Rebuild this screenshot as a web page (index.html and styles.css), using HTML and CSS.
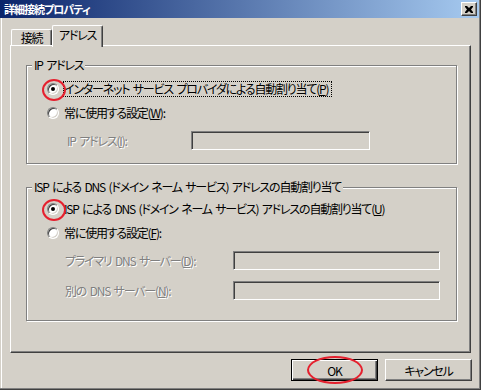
FILE: index.html
```html
<!DOCTYPE html>
<html lang="ja">
<head>
  <meta charset="UTF-8" />
  <title>詳細接続プロパティ</title>
  <link rel="stylesheet" href="styles.css">
</head>
<body>
  <div class="window">
    <div class="titlebar">
      <span class="title">詳細接続プロパティ</span>
      <span class="close-btn">
        <svg width="8" height="7" viewBox="0 0 8 7"><path d="M0 0h2l2 2 2-2h2v1l-2 2.5 2 2.5v1h-2l-2-2-2 2h-2v-1l2-2.5-2-2.5z" fill="#000"/></svg>
      </span>
    </div>

    <div class="tabs">
      <div class="tab">接続</div>
      <div class="tab active">アドレス</div>
    </div>

    <div class="panel">
      <!-- IP address group -->
      <fieldset class="group group-ip">
        <legend>IP アドレス</legend>
        <div class="opt first">
          <span class="radio checked marked"></span>
          <span class="label focus">インターネット サービス プロバイダによる自動割り当て(<u>P</u>)</span>
        </div>
        <div class="opt">
          <span class="radio"></span>
          <span class="label">常に使用する設定(<u>W</u>):</span>
        </div>
        <div class="field ip-field">
          <span class="field-label">IP アドレス(<u>I</u>):</span>
          <span class="input"></span>
        </div>
      </fieldset>

      <!-- DNS group -->
      <fieldset class="group group-dns">
        <legend>ISP による DNS (ドメイン ネーム サービス) アドレスの自動割り当て</legend>
        <div class="opt first">
          <span class="radio checked marked"></span>
          <span class="label">ISP による DNS (ドメイン ネーム サービス) アドレスの自動割り当て(<u>U</u>)</span>
        </div>
        <div class="opt">
          <span class="radio"></span>
          <span class="label">常に使用する設定(<u>F</u>):</span>
        </div>
        <div class="field dns-field">
          <span class="field-label">プライマリ DNS サーバー(<u>D</u>):</span>
          <span class="input"></span>
        </div>
        <div class="field dns-field second">
          <span class="field-label">別の DNS サーバー(<u>N</u>):</span>
          <span class="input"></span>
        </div>
      </fieldset>
    </div>

    <div class="buttons">
      <button class="btn default">OK</button>
      <button class="btn">キャンセル</button>
    </div>
  </div>
</body>
</html>
```

FILE: styles.css
```css
body {
  margin: 0;
  background: #d4d0c8;
  font-family: "Noto Sans CJK JP", "Liberation Sans", sans-serif;
  font-size: 12px;
  font-feature-settings: "palt";
  letter-spacing: -1.2px;
  word-spacing: 2px;
  color: #000;
}

.window {
  width: 481px;
  height: 390px;
  box-sizing: border-box;
  background: #d4d0c8;
  border-right: 1px solid #404040;
  border-bottom: 1px solid #404040;
  box-shadow: inset -1px -1px 0 #808080, inset 1px 0 0 #d4d0c8, inset 2px 0 0 #fff;
  display: flex;
  flex-direction: column;
}

.titlebar {
  height: 18px;
  margin-right: 1px;
  background: linear-gradient(to right, #0a246a, #a6caf0);
  display: flex;
  align-items: center;
  justify-content: space-between;
  padding: 0 2px 0 4px;
}

.title {
  color: #fff;
  font-weight: bold;
  font-size: 11px;
  letter-spacing: -1px;
  line-height: 18px;
}

.close-btn {
  width: 16px;
  height: 14px;
  box-sizing: border-box;
  background: #d4d0c8;
  border: 1px solid;
  border-color: #fff #404040 #404040 #fff;
  box-shadow: inset -1px -1px 0 #808080;
  display: flex;
  align-items: center;
  justify-content: center;
}

.tabs {
  display: flex;
  align-items: flex-end;
  padding: 7px 0 0 11px;
  height: 20px;
}

.tab {
  height: 16px;
  width: 41px;
  box-sizing: border-box;
  border-top: 1px solid #fff;
  border-left: 1px solid #fff;
  border-right: 1px solid #404040;
  box-shadow: inset -1px 0 0 #808080;
  border-radius: 2px 2px 0 0;
  text-align: center;
  line-height: 16px;
}

.tab.active {
  width: 51px;
  height: 22px;
  margin-bottom: -2px;
  background: #d4d0c8;
  position: relative;
  z-index: 1;
  line-height: 18px;
}

.panel {
  height: 308px;
  width: 461px;
  margin-left: 10px;
  box-sizing: border-box;
  border: 1px solid;
  border-color: #fff #404040 #404040 #fff;
  box-shadow: inset -1px -1px 0 #808080;
  padding: 12px 0 0 15px;
}

.group {
  width: 431px;
  box-sizing: border-box;
  margin: 0;
  padding: 0 0 13px 0;
  border: 1px solid #808080;
  box-shadow: inset 1px 1px 0 #fff, 1px 1px 0 #fff;
  min-width: 0;
}

.group legend {
  padding: 0 2px;
  margin-left: 5px;
  line-height: 14px;
  background: #d4d0c8;
}

.group-dns {
  margin-top: 16px;
  padding-bottom: 20px;
}

.opt {
  height: 24px;
  display: flex;
  align-items: center;
  padding-left: 20px;
}

.group-ip .opt.first {
  margin-top: 5px;
}

.group-dns .opt.first {
  margin-top: 3px;
}

.radio {
  width: 12px;
  height: 12px;
  box-sizing: border-box;
  border-radius: 50%;
  background: #fff;
  border: 1px solid;
  border-color: #808080 #fff #fff #808080;
  box-shadow: inset 1px 1px 0 #404040, inset -1px -1px 0 #d4d0c8;
  display: flex;
  align-items: center;
  justify-content: center;
  position: relative;
  flex-shrink: 0;
}

.radio.checked::after {
  content: "";
  width: 4px;
  height: 4px;
  border-radius: 50%;
  background: #000;
}

/* red annotation ring */
.radio.marked::before {
  content: "";
  position: absolute;
  left: -6px;
  top: -5px;
  width: 20px;
  height: 18px;
  border: 2px solid #e5202e;
  border-radius: 50%;
}

.label {
  margin-left: 4px;
  padding-right: 3px;
  border: 1px dotted transparent;
  line-height: 14px;
  white-space: nowrap;
  flex-shrink: 0;
}

.label.focus {
  border-color: #000;
}

.field {
  display: flex;
  align-items: center;
  height: 19px;
}

.field-label {
  color: #808080;
  text-shadow: 1px 1px 0 #fff;
  white-space: nowrap;
}

.ip-field {
  margin-top: 6px;
  padding-left: 40px;
}

.ip-field .field-label {
  width: 124px;
}

.ip-field .input {
  width: 179px;
}

.dns-field {
  margin-top: 6px;
  padding-left: 38px;
}

.dns-field.second {
  margin-top: 11px;
}

.dns-field .field-label {
  width: 168px;
}

.dns-field .input {
  width: 207px;
}

.input {
  height: 19px;
  box-sizing: border-box;
  background: #d4d0c8;
  border: 1px solid;
  border-color: #808080 #fff #fff #808080;
  box-shadow: inset 1px 1px 0 #404040, inset -1px -1px 0 #d4d0c8;
}

.buttons {
  display: flex;
  justify-content: flex-end;
  gap: 7px;
  padding-right: 8px;
  margin-top: 6px;
}

.btn {
  width: 87px;
  height: 22px;
  box-sizing: border-box;
  font: inherit;
  letter-spacing: inherit;
  word-spacing: inherit;
  color: #000;
  background: #d4d0c8;
  border: 1px solid;
  border-color: #fff #404040 #404040 #fff;
  box-shadow: inset -1px -1px 0 #808080;
  padding: 0;
  position: relative;
}

.btn.default {
  border: 1px solid #000;
  box-shadow: inset 1px 1px 0 #fff, inset -1px -1px 0 #404040, inset -2px -2px 0 #808080;
}

/* red annotation ellipse */
.btn.default::after {
  content: "";
  position: absolute;
  left: 15px;
  top: -4px;
  width: 52px;
  height: 24px;
  border: 2px solid #e5202e;
  border-radius: 50%;
}
```
